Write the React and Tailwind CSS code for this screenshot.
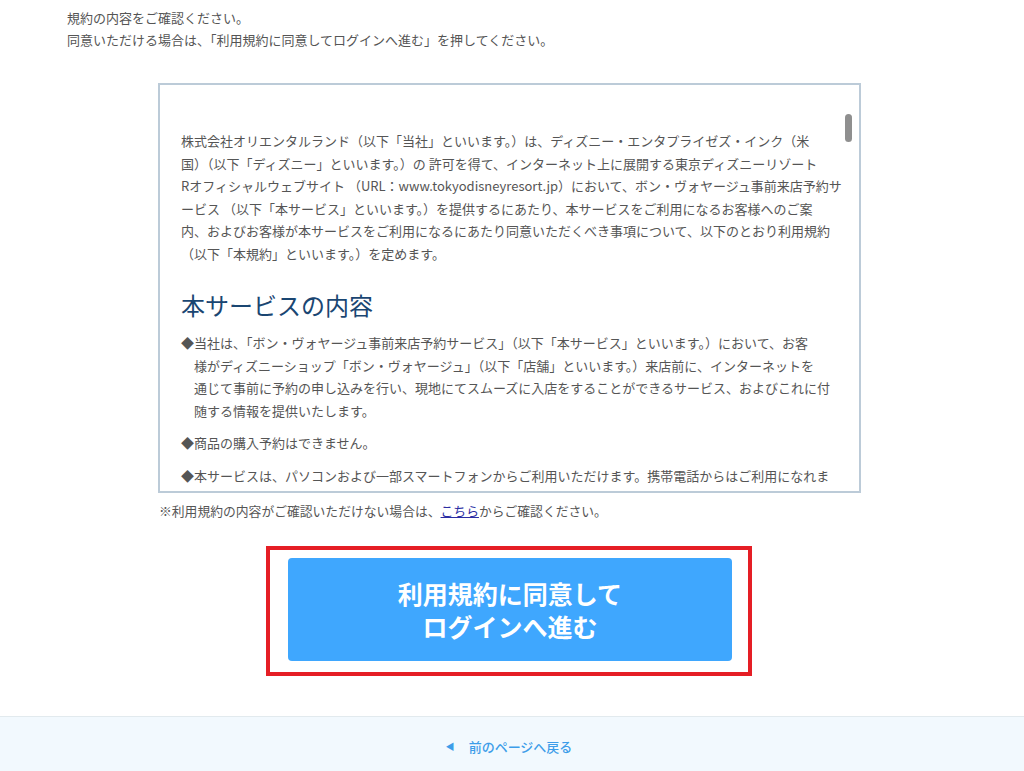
const font = { fontFamily: '"Noto Sans CJK JP", "Noto Sans", sans-serif' };

const Bullet = ({ lines, className = '' }) => (
  <p className={`pl-[13px] -indent-[13px] whitespace-nowrap ${className}`}>
    {lines.map((l, i) => (
      <span key={i}>
        {i > 0 && <br />}
        {l}
      </span>
    ))}
  </p>
);

export default function App() {
  return (
    <div className="min-h-[771px] bg-white flex flex-col text-[#555]" style={font}>
      {/* Intro */}
      <div className="w-[890px] mx-auto pt-[7px] text-[13px] leading-[22px]">
        <p>規約の内容をご確認ください。</p>
        <p>同意いただける場合は、「利用規約に同意してログインへ進む」を押してください。</p>

        {/* Terms box */}
        <div className="relative mt-[32px] ml-[91px] w-[703px] h-[410px] border-2 border-[#bccbd8] overflow-hidden">
          <div className="pt-[45px] pl-[21px] text-[13px] leading-[22.5px] text-[#555]">
            <p className="whitespace-nowrap">
              株式会社オリエンタルランド（以下「当社」といいます。）は、ディズニー・エンタプライゼズ・インク（米
              <br />
              国）（以下「ディズニー」といいます。）の 許可を得て、インターネット上に展開する東京ディズニーリゾート
              <br />
              Rオフィシャルウェブサイト （URL：www.tokyodisneyresort.jp）において、ボン・ヴォヤージュ事前来店予約サ
              <br />
              ービス （以下「本サービス」といいます。）を提供するにあたり、本サービスをご利用になるお客様へのご案
              <br />
              内、およびお客様が本サービスをご利用になるにあたり同意いただくべき事項について、以下のとおり利用規約
              <br />
              （以下「本規約」といいます。）を定めます。
            </p>

            <h2 className="mt-[22px] text-[24px] leading-[36px] text-[#1a4672]">本サービスの内容</h2>

            <Bullet
              className="mt-[9px]"
              lines={[
                '◆当社は、「ボン・ヴォヤージュ事前来店予約サービス」（以下「本サービス」といいます。）において、お客',
                '様がディズニーショップ「ボン・ヴォヤージュ」（以下「店舗」といいます。）来店前に、インターネットを',
                '通じて事前に予約の申し込みを行い、現地にてスムーズに入店をすることができるサービス、およびこれに付',
                '随する情報を提供いたします。',
              ]}
            />
            <Bullet className="mt-[10px]" lines={['◆商品の購入予約はできません。']} />
            <Bullet
              className="mt-[10px]"
              lines={[
                '◆本サービスは、パソコンおよび一部スマートフォンからご利用いただけます。携帯電話からはご利用になれま',
              ]}
            />
          </div>
          {/* scrollbar thumb */}
          <div className="absolute top-[29px] right-[7px] w-[7px] h-[28px] rounded-full bg-[#8f8f8f]" />
        </div>

        <p className="ml-[92px] mt-[8px] text-[12.8px] leading-[20px]">
          ※利用規約の内容がご確認いただけない場合は、
          <a href="#" className="text-[#2b2ea3] underline">こちら</a>
          からご確認ください。
        </p>

        {/* Agree button */}
        <div className="mt-[25px] ml-[199px] w-[486px] h-[130px] border-4 border-[#e51e25] pt-[8px] pl-[18px]">
          <button className="w-[444px] h-[103px] rounded-[4px] bg-[#3fa7fe] text-white font-bold text-[25px] leading-[33px]">
            利用規約に同意して
            <br />
            ログインへ進む
          </button>
        </div>
      </div>

      {/* Footer */}
      <footer className="mt-[40px] flex-1 border-t border-[#e2eaee] bg-[#f2f9fe] pt-[20px] pb-[30px]">
        <a href="#" className="flex items-center justify-center gap-[14px] pr-[6px] text-[13px] leading-[20px] text-[#3d9de9] font-medium">
          <span className="text-[9px]">◀</span>
          <span>前のページへ戻る</span>
        </a>
      </footer>
    </div>
  );
}
